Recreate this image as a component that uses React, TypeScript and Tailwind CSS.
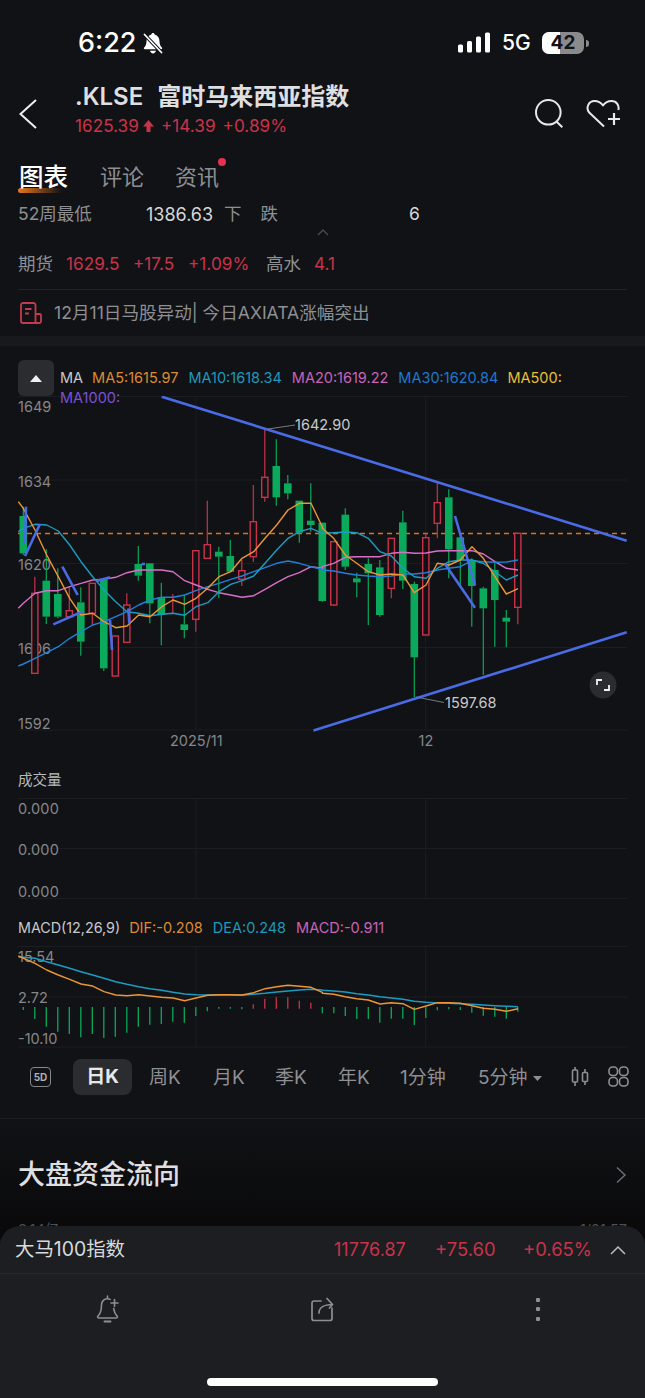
import React from "react";

type P = [number, number];
const a = (x: number, y: number): P => [x / 3, 350 + y / 3];
const b = (x: number, y: number): P => [320 + x / 3, 350 + y / 3];
const pts = (l: P[]) => l.map((p) => `${p[0].toFixed(1)},${p[1].toFixed(1)}`).join(" ");
const left = (f: number[]) => { const r: P[] = []; for (let i = 0; i < f.length; i += 2) r.push(a(f[i], f[i + 1])); return r; };
const right = (f: number[]) => { const r: P[] = []; for (let i = 0; i < f.length; i += 2) r.push(b(f[i], f[i + 1])); return r; };

const GREEN = "#0aa95b";
const RED = "#c9334a";

// [up?, wickTop, bodyTop, bodyBottom, wickBottom] in 3x crop units
const candles: [number, number, number, number, number][] = [
  [0, 470, 498, 610, 615], [1, 680, 730, 970, 970], [0, 598, 692, 800, 822], [0, 655, 732, 800, 805],
  [1, 712, 782, 800, 800], [0, 712, 757, 875, 917], [1, 700, 700, 790, 828], [0, 690, 690, 955, 963],
  [1, 858, 858, 978, 978], [1, 730, 765, 877, 877], [0, 588, 642, 677, 692], [0, 640, 640, 760, 820],
  [0, 698, 742, 795, 886], [1, 732, 790, 790, 790], [0, 735, 823, 840, 865], [1, 602, 602, 808, 845],
  [1, 452, 584, 625, 625], [0, 590, 605, 620, 745], [0, 570, 618, 665, 667], [1, 630, 662, 688, 708],
  [1, 405, 515, 620, 636], [1, 238, 382, 442, 455], [0, 268, 348, 442, 467], [0, 375, 400, 430, 448],
  [0, 452, 452, 548, 578], [0, 400, 512, 525, 545], [0, 518, 518, 753, 755], [1, 575, 575, 765, 768],
  [0, 475, 494, 650, 660], [0, 668, 685, 697, 742], [0, 625, 642, 670, 825], [0, 630, 652, 795, 800],
  [1, 565, 565, 715, 745], [0, 482, 517, 692, 717], [0, 695, 702, 922, 1042], [1, 550, 563, 855, 855],
  [1, 398, 458, 520, 565], [0, 418, 442, 598, 685], [0, 560, 562, 630, 705], [0, 625, 630, 708, 830],
  [0, 710, 715, 775, 975], [0, 640, 660, 750, 890], [0, 780, 803, 815, 892], [1, 550, 550, 772, 823],
];
const cx = (i: number) => 23.3 + i * 11.5;

const ma5 = [...left([55,455,70,475,105,540,140,615,175,680,209,745,243,795,278,790,312,815,347,833,381,828,416,795,450,800,485,770,519,750,554,763,588,745,623,715,657,680,692,665,726,625,761,605,795,565,830,525,864,480,898,460,933,460,967,530]),
  ...right([7,535,41,565,76,615,110,640,145,665,180,675,214,672,249,675,283,728,318,705,352,640,387,645,421,630,456,590,490,625,525,680,559,732,594,716])];
const ma10 = [...left([55,545,70,535,105,523,140,525,175,543,209,585,243,635,278,680,312,720,347,755,381,785,416,790,450,797,485,793,519,790,554,796,588,770,623,758,657,725,692,703,726,692,761,678,795,640,830,600,864,565,898,545,933,535,967,550]),
  ...right([7,550,41,548,76,546,110,548,145,565,180,605,214,618,249,655,283,680,318,685,352,655,387,635,421,630,456,630,490,640,525,665,559,690,594,675])];
const ma20 = [...left([55,775,70,760,105,730,140,722,175,722,209,710,243,700,278,690,312,688,347,682,381,668,416,660,450,660,485,660,519,665,554,692,588,705,623,718,657,728,692,735,726,742,761,737,795,718,830,698,864,680,898,668,933,650,967,655]),
  ...right([7,650,41,640,76,622,110,620,145,620,180,620,214,610,249,607,283,610,318,609,352,603,387,602,421,602,456,602,490,612,525,635,559,655,594,660])];
const ma30 = [...left([55,948,70,942,105,925,140,908,175,890,209,865,243,845,278,825,312,815,347,800,381,785,416,765,450,750,485,742,519,742,554,735,588,722,623,710,657,700,692,688,726,678,761,665,795,653,830,640,864,633,898,640,933,650,967,658]),
  ...right([7,660,41,663,76,670,110,675,145,678,180,680,214,678,249,672,283,672,318,668,352,660,387,655,421,650,456,632,490,635,525,637,559,636,594,630])];

const trends: [P, P][] = [
  [a(78,470), a(75,580)],
  [a(75,618), a(120,522)],
  [a(187,650), a(233,735)],
  [a(160,823), a(247,785)],
  [a(290,693), a(330,682)],
  [a(330,810), a(336,900)],
  [a(385,775), a(388,820)],
  [a(425,642), a(435,642)],
  [b(405,498), b(465,705)],
  [b(375,642), b(465,773)],
];

const macdBottoms = [300,327,350,365,372,382,372,384,380,368,350,344,342,335,338,318,304,296,296,298,0,0,0,0,0,0,310,310,318,327,327,338,326,326,345,324,301,298,300,308,317,320,326,305];
const macdRed: Record<number, number> = { 20: 283, 21: 266, 22: 262, 23: 262, 24: 272, 25: 278 };
const my = (y: number) => 910 + y / 3;
const mL = (f: number[]) => { const r: P[] = []; for (let i = 0; i < f.length; i += 2) r.push([f[i] / 3, my(f[i + 1])]); return r; };
const mR = (f: number[]) => { const r: P[] = []; for (let i = 0; i < f.length; i += 2) r.push([320 + f[i] / 3, my(f[i + 1])]); return r; };
const dif = [...mL([55,138,105,160,140,180,175,195,209,208,243,222,278,228,312,245,347,255,381,257,416,254,450,258,485,262,519,264,554,272,588,264,623,256,657,254,692,254,726,255,761,248,795,236,830,230,864,226,898,229,933,232,967,247]),
  ...mR([7,250,41,253,76,260,110,266,145,270,180,282,214,278,249,281,283,298,318,288,352,278,387,278,421,280,456,287,490,295,525,298,559,304,594,296])];
const dea = [...mL([55,140,105,145,140,155,175,165,209,175,243,185,278,195,312,205,347,215,381,223,416,230,450,236,485,241,519,247,554,252,588,254,623,255,657,255,692,255,726,256,761,253,795,250,830,246,864,243,898,240,933,238,967,240]),
  ...mR([7,241,41,243,76,246,110,251,145,255,180,260,214,264,249,268,283,274,318,277,352,279,387,280,421,281,456,283,490,285,525,287,559,289,594,290])];

const GRID = "#1b1d20";
const LABEL = "#85878b";

function MainChart() {
  return (
    <svg width="645" height="356" viewBox="0 396 645 356" className="block text-[14.5px]">
      {[396.5, 480, 563.5, 647.5, 730].map((y) => <line key={y} x1="18" x2="627" y1={y} y2={y} stroke={GRID} />)}
      <line x1="196" x2="196" y1="396" y2="730" stroke={GRID} />
      <line x1="425.7" x2="425.7" y1="396" y2="730" stroke={GRID} />
      <line x1="18" x2="627" y1="533.5" y2="533.5" stroke="#e0701f" strokeWidth="1.6" strokeDasharray="5 4" />
      {[["1649", 407], ["1634", 482], ["1620", 565], ["1606", 649], ["1592", 724]].map(([t, y]) => (
        <text key={t} x="18" y={Number(y) + 5} fill={LABEL}>{t}</text>
      ))}
      {candles.map(([up, wt, bt, bb, wb], i) => {
        const c = up ? RED : GREEN;
        const x = cx(i);
        const y = (v: number) => 350 + v / 3;
        return (
          <g key={i}>
            <line x1={x} x2={x} y1={y(wt)} y2={y(bt)} stroke={c} strokeWidth="1.2" />
            <line x1={x} x2={x} y1={y(bb)} y2={y(wb)} stroke={c} strokeWidth="1.2" />
            {bb > bt && (up
              ? <rect x={x - 3.1} y={y(bt)} width="6.2" height={(bb - bt) / 3} fill="#111215" stroke={c} strokeWidth="1.4" />
              : <rect x={x - 3.8} y={y(bt)} width="7.6" height={(bb - bt) / 3} fill={c} />)}
          </g>
        );
      })}
      <polyline points={pts(ma20)} fill="none" stroke="#d96fc8" strokeWidth="1.4" strokeLinejoin="round" />
      <polyline points={pts(ma30)} fill="none" stroke="#2080d8" strokeWidth="1.4" strokeLinejoin="round" />
      <polyline points={pts(ma10)} fill="none" stroke="#1d9cc2" strokeWidth="1.4" strokeLinejoin="round" />
      <polyline points={pts(ma5)} fill="none" stroke="#ec9636" strokeWidth="1.4" strokeLinejoin="round" />
      <line x1="161.7" y1="396.7" x2="626.7" y2="540.7" stroke="#4a6be6" strokeWidth="2.6" />
      <line x1="313.5" y1="730.5" x2="626.7" y2="632.3" stroke="#4a6be6" strokeWidth="2.6" />
      {trends.map((t, i) => <line key={i} x1={t[0][0]} y1={t[0][1]} x2={t[1][0]} y2={t[1][1]} stroke="#4a6be6" strokeWidth="2.6" />)}
      <polyline points="268,429 295,425" fill="none" stroke="#77797d" strokeWidth="1" />
      <text x="295" y="430" fill="#c8c9cc">1642.90</text>
      <polyline points="416,697 444,702.5" fill="none" stroke="#77797d" strokeWidth="1" />
      <text x="445" y="708" fill="#c8c9cc">1597.68</text>
      <circle cx="603" cy="685" r="13.5" fill="#2a2c2f" />
      <path d="M597 685v-5h5M609 685v5h-5" fill="none" stroke="#f2f2f2" strokeWidth="1.8" />
      <text x="170" y="746" fill={LABEL}>2025/11</text>
      <text x="418.5" y="746" fill={LABEL}>12</text>
    </svg>
  );
}

function VolumeChart() {
  return (
    <svg width="645" height="102" viewBox="0 798 645 102" className="block text-[14.5px]">
      {[798.5, 848.5, 898.5].map((y) => <line key={y} x1="18" x2="627" y1={y} y2={y} stroke={GRID} />)}
      <line x1="196" x2="196" y1="798" y2="898" stroke={GRID} />
      <line x1="425.7" x2="425.7" y1="798" y2="898" stroke={GRID} />
      {[814, 855, 897].map((y) => <text key={y} x="18" y={y} fill={LABEL} className="tracking-[0.2px]">0.000</text>)}
    </svg>
  );
}

function MacdChart() {
  return (
    <svg width="645" height="104" viewBox="0 946 645 104" className="block text-[14.5px]">
      {[946.5, 997, 1047].map((y) => <line key={y} x1="18" x2="627" y1={y} y2={y} stroke={GRID} />)}
      <line x1="196" x2="196" y1="946" y2="1047" stroke={GRID} />
      <line x1="425.7" x2="425.7" y1="946" y2="1047" stroke={GRID} />
      <text x="18" y="962" fill={LABEL}>15.54</text>
      <text x="18" y="1003" fill={LABEL}>2.72</text>
      <text x="18" y="1044" fill={LABEL}>-10.10</text>
      {macdBottoms.map((v, i) => {
        const red = macdRed[i];
        if (red) return <line key={i} x1={cx(i)} x2={cx(i)} y1={my(red)} y2={my(296)} stroke={RED} strokeWidth="1.3" />;
        return <line key={i} x1={cx(i)} x2={cx(i)} y1={my(291)} y2={my(v)} stroke={GREEN} strokeWidth="1.3" />;
      })}
      <polyline points={pts(dea)} fill="none" stroke="#1d9cc2" strokeWidth="1.5" strokeLinejoin="round" />
      <polyline points={pts(dif)} fill="none" stroke="#ec9636" strokeWidth="1.4" strokeLinejoin="round" />
    </svg>
  );
}

export default function App() {
  return (
    <div className="relative w-[645px] h-[1398px] overflow-hidden bg-[#111215] font-['Inter','Noto_Sans_CJK_SC',sans-serif] text-[#8d8f93]">
      {/* status bar */}
      <div className="h-[80px] pt-[27px] flex items-start pl-[78px]">
        <span className="w-[57px] text-[27px] leading-[32px] font-medium text-white">6:22</span>
        <svg width="22" height="23" viewBox="0 0 22 23" className="ml-[7px] mt-[5px]">
          <path d="M11 1c.9 0 1.500.6 1.600 1.400 3.200.8 4.900 3.400 4.900 6.900 0 3 1 5 2.400 6.300.6.700.2 1.600-.7 1.600H2.800c-.9 0-1.300-.9-.7-1.600 1.400-1.300 2.400-3.300 2.400-6.300 0-3.500 1.700-6.100 4.900-6.900.1-.8.7-1.400 1.600-1.400zM8 18.800h6c-.3 1.300-1.600 2.700-3 2.700s-2.700-1.400-3-2.700z" fill="#fff" />
          <line x1="2.500" y1="2.500" x2="19.500" y2="20.500" stroke="#111215" strokeWidth="3.500" />
          <line x1="2.500" y1="2.500" x2="19.500" y2="20.500" stroke="#fff" strokeWidth="1.800" strokeLinecap="round" />
        </svg>
        <svg width="34" height="22" viewBox="0 0 34 22" className="ml-[294px] mt-[5px]">
          <rect x="0" y="12.500" width="5" height="8" rx="1.500" fill="#fff" />
          <rect x="9" y="9" width="5" height="11.500" rx="1.500" fill="#fff" />
          <rect x="18" y="4.500" width="5" height="16" rx="1.500" fill="#fff" />
          <rect x="27" y="0.500" width="5" height="20" rx="1.500" fill="#fff" />
        </svg>
        <span className="ml-[10px] w-[28px] text-[21px] leading-[32px] font-medium text-white">5G</span>
        <div className="ml-[12px] mt-[5px] flex items-center">
          <div className="relative w-[42px] h-[22px] rounded-[7px] overflow-hidden bg-[#8b8b8b] flex items-center justify-center">
            <div className="absolute left-0 top-0 bottom-0 w-[18px] bg-white" />
            <span className="relative text-[19px] leading-[22px] font-bold text-[#111215]">42</span>
          </div>
          <div className="ml-[2px] w-[2.500px] h-[7px] rounded-r-sm bg-[#8b8b8b]" />
        </div>
      </div>

      {/* header */}
      <div className="relative h-[70px] pl-[75px]">
        <svg width="20" height="32" viewBox="0 0 20 32" className="absolute left-[18px] top-[18px]">
          <path d="M18 2 2.500 16 18 30" fill="none" stroke="#eeeeee" strokeWidth="2" />
        </svg>
        <div className="pt-[1px] h-[33px] flex items-center text-[24px] leading-[32px] font-semibold text-[#dedfe1]">
          <span>.KLSE</span>
          <span className="ml-[14px]">富时马来西亚指数</span>
        </div>
        <div className="h-[26px] flex items-center text-[17.200px] text-[#c9334a]">
          <span>1625.39</span>
          <svg width="11" height="13" viewBox="0 0 11 13" className="ml-[4px]"><path d="M5.500 0 11 6.500H7.500V12h-4V6.500H0z" fill="#c9334a" /></svg>
          <span className="ml-[7px]">+14.39</span>
          <span className="ml-[7px]">+0.89%</span>
        </div>
        <svg width="30" height="32" viewBox="0 0 30 32" className="absolute left-[533px] top-[19px]">
          <circle cx="15.300" cy="13.300" r="12.300" fill="none" stroke="#e8e8e8" strokeWidth="2" />
          <line x1="23.700" y1="22.700" x2="29.300" y2="28.300" stroke="#e8e8e8" strokeWidth="2" />
        </svg>
        <svg width="36" height="30" viewBox="0 0 36 30" className="absolute left-[586px] top-[19px]">
          <path d="M18 27.500 3.200 13.500C-.5 9 2.500 2 8.500 2c3.600 0 6.500 1.700 8.500 4.500C19 3.700 21.900 2 25.500 2c5.200 0 8 4.500 6.800 9" fill="none" stroke="#e8e8e8" strokeWidth="2" strokeLinejoin="round" />
          <path d="M28 14v12M22 20h12" stroke="#e8e8e8" strokeWidth="2.200" fill="none" />
        </svg>
      </div>

      {/* tabs */}
      <div className="h-[45px] pt-[10px] pl-[19px] flex items-start">
        <div className="relative h-[35px] flex items-center text-[24.500px] font-medium text-white">
          <div className="absolute left-[-1px] top-[28px] w-[44px] h-[5px] rounded-l-full bg-gradient-to-r from-[#e9781c] to-transparent" />
          <span className="relative">图表</span>
        </div>
        <div className="ml-[32px] h-[35px] flex items-center text-[22px]">评论</div>
        <div className="relative ml-[31px] h-[35px] flex items-center text-[22px]">
          资讯
          <div className="absolute right-[-7px] top-[-2px] w-[8px] h-[8px] rounded-full bg-[#e8304f]" />
        </div>
      </div>

      {/* stats */}
      <div className="h-[38px] pl-[18px] flex items-center text-[17.500px]">
        <span className="w-[128px]">52周最低</span>
        <span className="w-[67px] text-[#d6d7d9] text-[18px]">1386.63</span>
        <span className="ml-[11px]">下</span>
        <span className="ml-[19px]">跌</span>
        <span className="ml-[131px] text-[#d6d7d9]">6</span>
      </div>
      <div className="h-[13px] flex justify-center">
        <svg width="14" height="8" viewBox="0 0 14 8" className="mt-[-5px]"><path d="M2 7 7 2l5 5" fill="none" stroke="#4a4c50" strokeWidth="1.300" /></svg>
      </div>
      <div className="h-[36px] mx-[18px] flex items-center text-[17.200px] border-b border-[#222427] pb-[7px] box-content">
        <span className="w-[35px] text-[17.500px]">期货</span>
        <span className="ml-[13px] w-[54px] text-[#c9334a]">1629.5</span>
        <span className="ml-[13px] w-[41px] text-[#c9334a]">+17.5</span>
        <span className="ml-[14px] w-[59px] text-[#c9334a]">+1.09%</span>
        <span className="ml-[19px] w-[35px] text-[17.500px]">高水</span>
        <span className="ml-[13px] text-[#c9334a]">4.1</span>
      </div>
      <div className="h-[46px] pl-[20px] flex items-center text-[17.600px] text-[#8d8f93]">
        <svg width="22" height="22" viewBox="0 0 22 22" fill="none" stroke="#c23b4e" strokeWidth="1.800">
          <path d="M15.500 12V3a2 2 0 0 0-2-2H3a2 2 0 0 0-2 2v16a2 2 0 0 0 2 2h16.500A1.500 1.500 0 0 0 21 19.500V13.500a1.500 1.500 0 0 0-1.500-1.500h-4M15.500 12v9M5 7h6.500M5 11.500h4" strokeLinejoin="round" />
        </svg>
        <span className="ml-[12px]">12月11日马股异动| 今日AXIATA涨幅突出</span>
      </div>
      <div className="h-[10px] bg-[#17191c]" />

      {/* MA legend */}
      <div className="relative z-10 h-[50px] pl-[18px] pt-[14px] flex items-start">
        <div className="w-[36px] h-[36px] rounded-md bg-[#2a2c30] flex items-center justify-center shrink-0">
          <svg width="12" height="7" viewBox="0 0 12 7"><path d="M6 0l6 7H0z" fill="#f0f0f0" /></svg>
        </div>
        <div className="ml-[6px] pt-[8px] flex flex-wrap text-[14.500px] leading-[20px] w-[560px]">
          <span className="text-[#c8c9cc] mr-[9px]">MA</span>
          <span className="text-[#dd8a35] mr-[10px]">MA5:1615.97</span>
          <span className="text-[#1f98bd] mr-[10px]">MA10:1618.34</span>
          <span className="text-[#c863b8] mr-[10px]">MA20:1619.22</span>
          <span className="text-[#1f78cf] mr-[9px]">MA30:1620.84</span>
          <span className="text-[#e6bf3e]">MA500:</span>
          <span className="basis-full text-[#7a50d8]">MA1000:</span>
        </div>
      </div>

      <MainChart />

      <div className="h-[46px] pl-[18px] flex items-center pt-[10px] text-[14.500px] text-[#b9babd]">成交量</div>
      <VolumeChart />
      <div className="h-[46px] pl-[18px] pt-[10px] flex items-center text-[14.500px] text-[#c8c9cc]">
        <span className="text-[14.300px]">MACD(12,26,9)</span>
        <span className="ml-[9px] text-[#dd8a35]">DIF:-0.208</span>
        <span className="ml-[10px] text-[#1f98bd]">DEA:0.248</span>
        <span className="ml-[10px] text-[#c863b8]">MACD:-0.911</span>
      </div>
      <MacdChart />

      {/* period tabs */}
      <div className="h-[69px] border-b border-[#1b1d20] flex items-start pt-[9px] pl-[30px] text-[19px] whitespace-nowrap">
        <div className="mt-[8px] w-[21px] h-[20px] rounded-[4px] border-[1.500px] border-[#85878b] flex items-center justify-center text-[10px] font-bold text-[#b0b1b4]">5D</div>
        <div className="ml-[22px] w-[59px] h-[36px] pt-[1px] rounded-lg bg-[#2a2c30] flex items-center justify-center text-[19px] font-bold text-[#e8e8e8]">日K</div>
        <div className="ml-[17px] w-[32px] h-[36px] pt-[2px] flex items-center">周K</div>
        <div className="ml-[32px] w-[32px] h-[36px] pt-[2px] flex items-center">月K</div>
        <div className="ml-[30px] w-[32px] h-[36px] pt-[2px] flex items-center">季K</div>
        <div className="ml-[31px] w-[32px] h-[36px] pt-[2px] flex items-center">年K</div>
        <div className="ml-[30px] w-[47px] h-[36px] pt-[2px] flex items-center">1分钟</div>
        <div className="ml-[31px] w-[49px] h-[36px] pt-[2px] flex items-center">5分钟</div>
        <svg width="9" height="5" viewBox="0 0 9 5" className="ml-[6px] mt-[17px]"><path d="M0 0h9L4.500 5z" fill="#8d8f93" /></svg>
        <svg width="18" height="22" viewBox="0 0 18 22" className="ml-[29px] mt-[7px]" fill="none" stroke="#8d8f93" strokeWidth="1.600">
          <rect x="1.500" y="4" width="5" height="12" rx="1" />
          <path d="M4 1v3M4 16v4M14 3v4M14 15v4" />
          <rect x="11.500" y="6.500" width="5" height="9" rx="1" />
        </svg>
        <svg width="21" height="21" viewBox="0 0 21 21" className="ml-[19px] mt-[7px]" fill="none" stroke="#8d8f93" strokeWidth="1.600">
          <rect x="1" y="1" width="8.500" height="8.500" rx="3.500" />
          <rect x="11.500" y="1" width="8.500" height="8.500" rx="3.500" />
          <rect x="1" y="11.500" width="8.500" height="8.500" rx="3.500" />
          <rect x="11.500" y="11.500" width="8.500" height="8.500" rx="3.500" />
        </svg>
      </div>

      {/* fund flow */}
      <div className="h-[120px] bg-gradient-to-b from-[#111215] to-[#09090a]">
        <div className="h-[84px] pt-[28px] px-[18px] flex items-center justify-between">
          <span className="text-[27px] font-medium text-[#dedfe1]">大盘资金流向</span>
          <svg width="12" height="20" viewBox="0 0 12 20"><path d="M2 2.500l8 7.500-8 7.500" fill="none" stroke="#6b6d71" strokeWidth="1.500" /></svg>
        </div>
        <div className="mt-[16px] px-[18px] flex justify-between text-[14.500px] text-[#4d4f53]">
          <span>3.14亿</span>
          <span>1/21:57</span>
        </div>
      </div>

      {/* bottom sheet */}
      <div className="absolute left-0 right-0 bottom-0 h-[172px] rounded-t-[20px] bg-[#1c1e21]">
        <div className="relative h-[48px] pl-[15px] flex items-center border-b border-[#25282b] text-[18.400px] text-[#d8d9db]">
          <span className="w-[319px] text-[19.400px]">大马100指数</span>
          <span className="w-[73px] text-[18px] text-[#c9334a]">11776.87</span>
          <span className="ml-[28px] w-[61px] text-[#c9334a]">+75.60</span>
          <span className="ml-[27px] w-[67px] text-[#c9334a]">+0.65%</span>
          <svg width="16" height="10" viewBox="0 0 16 10" className="ml-[20px]"><path d="M1 9l7-7 7 7" fill="none" stroke="#bbbcbf" strokeWidth="1.500" /></svg>
        </div>
        <div className="h-[70px] flex items-center">
          <svg width="24" height="28" viewBox="0 0 24 28" className="ml-[96px]" fill="none" stroke="#8d8f93" strokeWidth="1.600" strokeLinecap="round" strokeLinejoin="round">
            <path d="M11.500 1v2.500M14 4.300C10 2.500 5.500 5.200 5.500 10c0 5-1 9-4 11.500 0 1 .5 1.500 1.500 1.500h17c1 0 1.500-.5 1.500-1.500-2.200-2-3.300-4.500-3.800-8" />
            <path d="M15 8h7M18.500 4.500v7" />
            <path d="M8.500 26.500h6" strokeWidth="2" />
          </svg>
          <svg width="23" height="25" viewBox="0 0 23 25" className="ml-[191px]" fill="none" stroke="#8d8f93" strokeWidth="1.700" strokeLinecap="round" strokeLinejoin="round">
            <path d="M10 4H3a2 2 0 0 0-2 2v15.500a2 2 0 0 0 2 2h16a2 2 0 0 0 2-2V11" />
            <path d="M8 16c0-5 4.500-8.500 13.500-8.500M16 1.500l5.500 6-3 3.500" />
          </svg>
          <div className="ml-[202px] flex flex-col gap-[5.500px]">
            <div className="w-[4px] h-[4px] bg-[#8d8f93] rounded-[1px]" />
            <div className="w-[4px] h-[4px] bg-[#8d8f93] rounded-[1px]" />
            <div className="w-[4px] h-[4px] bg-[#8d8f93] rounded-[1px]" />
          </div>
        </div>
        <div className="mt-[34px] mx-auto w-[231px] h-[8px] rounded-full bg-white" />
      </div>
    </div>
  );
}
